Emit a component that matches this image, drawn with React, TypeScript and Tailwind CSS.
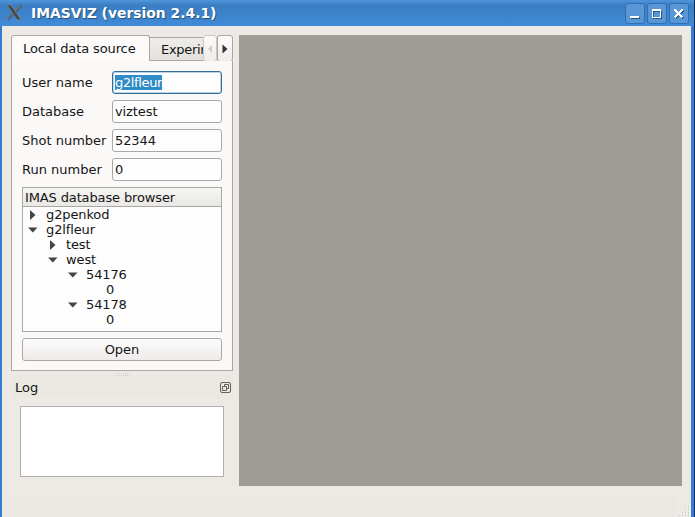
import React from "react";

const fields = [
  { label: "User name", value: "g2lfleur", selected: true },
  { label: "Database", value: "viztest" },
  { label: "Shot number", value: "52344" },
  { label: "Run number", value: "0" },
];

const rows = [
  { text: "g2penkod", pad: "pl-1", state: "closed" },
  { text: "g2lfleur", pad: "pl-1", state: "open" },
  { text: "test", pad: "pl-6", state: "closed" },
  { text: "west", pad: "pl-6", state: "open" },
  { text: "54176", pad: "pl-11", state: "open" },
  { text: "0", pad: "pl-16", state: "leaf" },
  { text: "54178", pad: "pl-11", state: "open" },
  { text: "0", pad: "pl-16", state: "leaf" },
];

function Arrow({ state }: { state: string }) {
  return (
    <svg width="11" height="10" viewBox="0 0 11 10" className="shrink-0">
      {state === "closed" && <path d="M3 0 L8.5 5 L3 10Z" fill="#444" />}
      {state === "open" && <path d="M1 2.5 H10.5 L5.75 7.5Z" fill="#444" />}
    </svg>
  );
}

function WindowButton({ children }: { children: React.ReactNode }) {
  return (
    <div className="h-[21px] w-5 rounded-[3px] border border-[#2f6fb3] bg-[#5896d6]">
      <svg width="18" height="19" viewBox="0 0 18 19" fill="none" shapeRendering="crispEdges">
        {children}
      </svg>
    </div>
  );
}

function TitleBar() {
  return (
    <header className="flex h-[26px] shrink-0 bg-linear-to-b from-[#5095da] from-0% via-[#3a7dc3] via-20% to-[#418bd8] pl-[6px]">
      <svg width="17" height="17" viewBox="0 0 17 17" className="mt-[4px]">
        <path d="M15 1 L9.3 8 M7 10 L1.5 15.5" stroke="#424a52" strokeWidth="2.2" />
        <path d="M14.6 1 L9 7.6 M6.6 10.2 L1.2 15.4" stroke="#b0a698" strokeWidth="0.8" />
        <path d="M0.8 1 H5 L15.2 15.8 H11Z" fill="#444a50" stroke="#7e8b96" strokeWidth="0.7" />
      </svg>
      <h1 className="ml-2 grow text-[13.9px] leading-[26px] font-bold whitespace-nowrap text-white [text-shadow:1px_1px_1px_#24527f]">
        IMASVIZ (version 2.4.1)
      </h1>
      <div className="mt-[3px] mr-[5px] flex gap-[2px]">
        <WindowButton>
          <path d="M5 14 H14" stroke="#285789" strokeWidth="2" />
          <path d="M4 13 H13" stroke="#fff" strokeWidth="2" />
        </WindowButton>
        <WindowButton>
          <path d="M5.5 7.5 H13.5 V14.5 H5.5Z" stroke="#285789" />
          <path d="M4.5 5.5 H12.5 V13.5 H4.5Z" stroke="#fff" />
          <path d="M4 6 H13" stroke="#fff" strokeWidth="2" />
        </WindowButton>
        <WindowButton>
          <path d="M5.5 6.5 L13.5 14.5 M13.5 6.5 L5.5 14.5" stroke="#285789" strokeWidth="2.2" />
          <path d="M4.5 5.5 L12.5 13.5 M12.5 5.5 L4.5 13.5" stroke="#fff" strokeWidth="2.4" />
        </WindowButton>
      </div>
    </header>
  );
}

function TabStrip() {
  return (
    <div className="flex h-[27px] w-[222px] shrink-0">
      <div className="h-[27px] w-[139px] rounded-t-[3px] border border-b-0 border-[#aaa8a5] bg-[#fcfbfa] pl-[11px] leading-[26px] tracking-[-0.11px] whitespace-nowrap">
        Local data source
      </div>
      <div className="mt-[2px] h-[24px] w-[53px] overflow-hidden border-y border-[#aaa8a5] bg-linear-to-b from-[#eeedeb] to-[#e3e1de] pl-[11px] leading-[24px] tracking-[-0.3px] whitespace-nowrap">
        Experiment
      </div>
      <div className="flex h-[27px] w-[14px] items-center justify-center rounded-[3px] border border-[#c9c7c4] bg-linear-to-b from-[#fcfbfa] to-[#eeedeb]">
        <svg width="6" height="10"><path d="M5 1 L1 5 L5 9Z" fill="#cfcdca" /></svg>
      </div>
      <div className="flex h-[27px] w-4 items-center justify-center rounded-[3px] border border-[#aaa8a5] bg-linear-to-b from-[#fdfcfb] to-[#eeedeb] pr-px">
        <svg width="6" height="10"><path d="M0.5 0.5 L5.5 5 L0.5 9.5Z" fill="#333" /></svg>
      </div>
    </div>
  );
}

function SourcePanel() {
  return (
    <section className="flex h-[336px] w-[222px] flex-col">
      <TabStrip />
      <div className="-mt-px flex grow flex-col border border-t-0 border-[#aaa8a5] bg-[#fbf9f8] px-[10px] pt-[10px]">
        <div className="flex flex-col gap-[5px]">
          {fields.map((f) => (
            <label key={f.label} className="flex h-6 items-start">
              <span className="w-[90px] shrink-0 leading-6 whitespace-nowrap">{f.label}</span>
              <span
                className={
                  "flex h-[23px] w-[110px] items-center rounded-[3px] border bg-[#fefdfd] pl-[2px] " +
                  (f.selected ? "border-[#356d9d] shadow-[inset_0_0_0_1px_#b9d3e5]" : "border-[#aaa8a6]")
                }
              >
                <span
                  className={
                    f.selected ? "bg-[#308cc6] leading-[15px] tracking-[-0.35px] text-white" : "leading-[15px] tracking-[-0.1px]"
                  }
                >
                  {f.value}
                </span>
              </span>
            </label>
          ))}
        </div>
        <div className="mt-[5px] flex h-[145px] w-[200px] flex-col border border-[#aaa8a6] bg-[#fdfdfd]">
          <div className="h-[19px] shrink-0 border-b border-[#aaa8a6] bg-linear-to-b from-[#f5f5f2] to-[#e9e8e5] pl-[2px] leading-[19px] tracking-[-0.13px]">
            IMAS database browser
          </div>
          {rows.map((r, i) => (
            <div key={i} className={"flex h-[15px] items-center gap-2 tracking-[-0.12px] " + r.pad}>
              <Arrow state={r.state} />
              <span className="leading-[15px]">{r.text}</span>
            </div>
          ))}
        </div>
        <button className="mt-[6px] h-[23px] w-[200px] rounded-[3px] border border-[#aaa8a6] bg-linear-to-b from-[#fdfcfc] to-[#eeebea] leading-[21px]">
          Open
        </button>
      </div>
    </section>
  );
}

function LogPanel() {
  return (
    <section className="flex w-[222px] flex-col">
      <svg width="16" height="4" className="ml-[104px] shrink-0">
        <path d="M0 1.5 H16 M0 3.5 H16" stroke="#d0cec8" strokeDasharray="1 1" />
      </svg>
      <div className="flex h-[22px] items-center justify-between bg-[#ebe8e1] pr-[2px] pl-1">
        <span className="pt-px">Log</span>
        <svg width="11" height="11" viewBox="0 0 11 11" fill="none" stroke="#64625f">
          <rect x="0.5" y="0.5" width="10" height="10" rx="1.5" />
          <path d="M4.5 4.5 V2.5 H8.5 V6.5 H6.5 M2.5 4.5 H6.5 V8.5 H2.5Z" />
        </svg>
      </div>
      <div className="mt-2 ml-[9px] h-[71px] w-[204px] border border-[#b0aeb1] bg-white" />
    </section>
  );
}

export default function App() {
  return (
    <div className="flex h-[517px] w-[695px] flex-col overflow-hidden bg-[#edeae6] font-['DejaVu_Sans',sans-serif] text-[13px] leading-4 text-[#151515]">
      <div className="flex grow border-r border-[#09305c]">
        <div className="flex grow flex-col">
          <TitleBar />
          <div className="flex grow flex-col border-r-[3px] border-l-2 border-[#367fcf]">
            <main className="flex h-[469px] pt-[9px] pl-[9px]">
              <div className="flex flex-col">
                <SourcePanel />
                <div className="mt-[1px]">
                  <LogPanel />
                </div>
              </div>
              <div className="ml-[6px] h-[451px] w-[443px] bg-[#9e9c97]" />
            </main>
            <footer className="ml-[6px] flex grow justify-end">
              <div className="grow bg-[#ebe8e1]" />
              <svg width="17" height="22" viewBox="0 0 17 22" shapeRendering="crispEdges">
                <path d="M5 21h1M8 18h1M8 21h1M11 15h1M11 18h1M11 21h1M14 12h1M14 15h1M14 18h1M14 21h1" stroke="#b9b8c2" transform="translate(0,-0.5)" />
                <path d="M6 20h1M9 17h1M9 20h1M12 14h1M12 17h1M12 20h1M15 11h1M15 14h1M15 17h1M15 20h1" stroke="#fff" />
              </svg>
            </footer>
          </div>
        </div>
      </div>
    </div>
  );
}
